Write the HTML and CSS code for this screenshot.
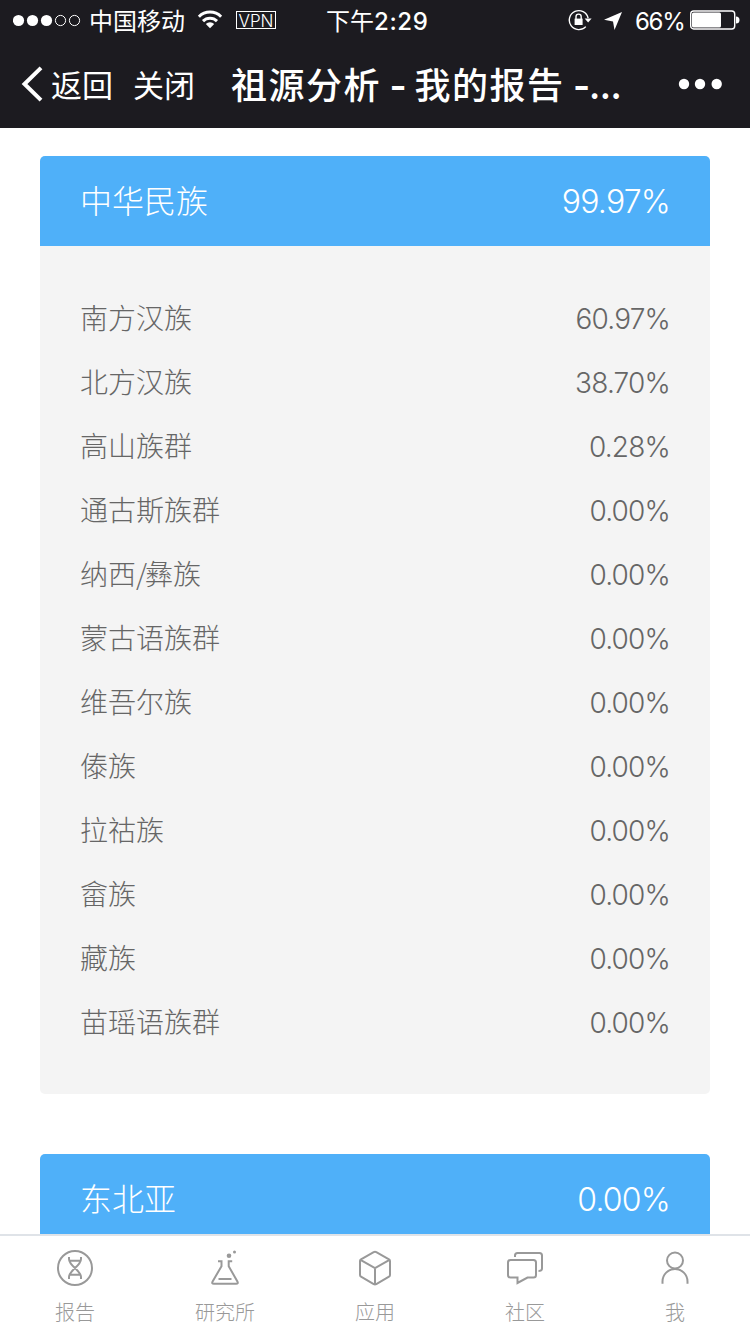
FILE: index.html
```html
<!DOCTYPE html>
<html lang="zh-CN">

<head>
    <meta charset="UTF-8">
    <meta name="viewport" content="width=device-width, initial-scale=1.0">
    <title>祖源分析 - 我的报告</title>
    <link rel="stylesheet" href="styles.css">
</head>

<body>
    <!-- 状态栏 -->
    <div class="status">
        <svg class="signal" width="68" height="14" viewBox="0 0 68 14">
            <g fill="#fff">
                <circle cx="5.5" cy="7.5" r="5.6" />
                <circle cx="19.5" cy="7.5" r="5.6" />
                <circle cx="33.5" cy="7.5" r="5.6" />
            </g>
            <g fill="none" stroke="#fff">
                <circle cx="47.5" cy="7.5" r="5.1" />
                <circle cx="61.5" cy="7.5" r="5.1" />
            </g>
        </svg>
        <span class="carrier">中国移动</span>
        <svg class="wifi" width="26" height="20" viewBox="0 0 26 20">
            <g fill="none" stroke="#fff" stroke-width="3">
                <path d="M1.9 7.7a15.7 15.7 0 0 1 22.2 0" />
                <path d="M6 12.1a9.9 9.9 0 0 1 14 0" />
            </g>
            <path d="M13 19.2l-4.2-4.2a6 6 0 0 1 8.4 0z" fill="#fff" />
        </svg>
        <span class="vpn">VPN</span>
        <span class="time">下午<b>2:29</b></span>
        <svg class="lock" width="24" height="22" viewBox="0 0 24 22">
            <path d="M17.8 17.6A9.5 9.5 0 1 1 20.1 9.2" fill="none" stroke="#fff" stroke-width="1.4" />
            <path d="M16.6 9.6h7l-3.5 4z" fill="#fff" />
            <rect x="6.6" y="9.6" width="8" height="6.4" fill="#fff" />
            <path d="M8 10V7.700a2.600 2.600 0 0 1 5.200 0V10" fill="none" stroke="#fff" stroke-width="1.4" />
        </svg>
        <svg class="locate" width="18" height="18" viewBox="0 0 18 18">
            <path d="M18 0L10.5 18L9 9.5L0 7.8z" fill="#fff" />
        </svg>
        <span class="percent">66%</span>
        <svg class="battery" width="50" height="20" viewBox="0 0 50 20">
            <rect x=".7" y="1" width="44" height="18" rx="3" fill="none" stroke="#fff" stroke-width="1.4" />
            <rect x="2" y="2.5" width="29" height="15" rx="1.5" fill="#fff" />
            <path d="M46 6.6a3.4 3.4 0 0 1 0 7z" fill="#fff" />
        </svg>
    </div>

    <!-- 导航栏 -->
    <div class="nav">
        <svg class="back" width="22" height="36" viewBox="0 0 22 36">
            <path d="M20 1.9L3.5 18 20 34.1" fill="none" stroke="#fff" stroke-width="4" />
        </svg>
        <span class="nav-link">返回</span>
        <span class="nav-link">关闭</span>
        <span class="title">祖源分析 <span class="dash">-</span> 我的报告 <span class="dash">-</span><span class="dots">...</span></span>
        <svg class="more" width="44" height="12" viewBox="0 0 44 12" fill="#fff">
            <circle cx="6" cy="6" r="5.2" />
            <circle cx="22" cy="6" r="5.2" />
            <circle cx="38.7" cy="6" r="5.2" />
        </svg>
    </div>

    <!-- 祖源列表 -->
    <div class="content">
        <div class="card">
            <div class="card-head"><span>中华民族</span><span class="num">99.97%</span></div>
            <ul class="list">
                <li><span>南方汉族</span><span class="num">60.97%</span></li>
                <li><span>北方汉族</span><span class="num">38.70%</span></li>
                <li><span>高山族群</span><span class="num">0.28%</span></li>
                <li><span>通古斯族群</span><span class="num">0.00%</span></li>
                <li><span>纳西<span class="slash">/</span>彝族</span><span class="num">0.00%</span></li>
                <li><span>蒙古语族群</span><span class="num">0.00%</span></li>
                <li><span>维吾尔族</span><span class="num">0.00%</span></li>
                <li><span>傣族</span><span class="num">0.00%</span></li>
                <li><span>拉祜族</span><span class="num">0.00%</span></li>
                <li><span>畲族</span><span class="num">0.00%</span></li>
                <li><span>藏族</span><span class="num">0.00%</span></li>
                <li><span>苗瑶语族群</span><span class="num">0.00%</span></li>
            </ul>
        </div>
        <div class="card">
            <div class="card-head"><span>东北亚</span><span class="num">0.00%</span></div>
        </div>
    </div>

    <!-- 底部菜单 -->
    <div class="tabs">
        <div class="tab">
            <svg width="40" height="40" viewBox="0 0 40 40">
                <circle cx="20" cy="20" r="17" />
                <path d="M14 9v2c0 7 12 11.5 12 18v2M26 9v2c0 7-12 11.5-12 18v2M15 12.8h10M15 26.8h10" />
            </svg>
            <span>报告</span>
        </div>
        <div class="tab">
            <svg width="40" height="40" viewBox="0 0 40 40">
                <path d="M13 13.2h3.500v5L7.600 33.500q-1.200 2.300 1.300 2.300h22.200q2.500 0 1.300-2.300L23.700 18.200v-5h3.500M13.500 31h13" />
                <circle class="solid" cx="24" cy="7.8" r="2.3" />
                <circle class="solid" cx="29.5" cy="4" r="1.5" />
            </svg>
            <span>研究所</span>
        </div>
        <div class="tab">
            <svg width="40" height="40" viewBox="0 0 40 40">
                <path d="M18.7 4.2q1.300-.7 2.600 0L34 11.300q1 .6 1 1.700v14q0 1.100-1 1.700l-12.700 7.500q-1.300.7-2.600 0L6 28.700q-1-.6-1-1.700V13q0-1.100 1-1.700zM5.500 11.800L20 20l14.500-8.200M20 20v16.500" />
            </svg>
            <span>应用</span>
        </div>
        <div class="tab">
            <svg width="40" height="40" viewBox="0 0 40 40">
                <path d="M5.5 12h23q2.500 0 2.500 2.500V27q0 2.500-2.500 2.500h-6L12.500 35v-5.500h-7Q3 29.500 3 27V14.500Q3 12 5.500 12z" />
                <path d="M10 9V7.5Q10 5 12.500 5h22Q37 5 37 7.500v13q0 2.600-3.500 2.600" />
            </svg>
            <span>社区</span>
        </div>
        <div class="tab">
            <svg width="40" height="40" viewBox="0 0 40 40">
                <circle cx="20" cy="12.5" r="8" />
                <path d="M7.5 35.8v-2.300a12.500 12.500 0 0 1 25 0v2.300" />
            </svg>
            <span>我</span>
        </div>
    </div>
</body>

</html>
```
FILE: styles.css
```css
* {
    box-sizing: border-box;
}

/* 页面布局样式 */
body {
    margin: 0;
    height: 1334px;
    display: flex;
    flex-direction: column;
    overflow: hidden;
    background: #fff;
    font-family: "Noto Sans CJK SC", sans-serif;
}

svg {
    flex: none;
    display: block;
}

span {
    white-space: nowrap;
}

/* 状态栏 */
.status {
    flex: none;
    height: 40px;
    display: flex;
    align-items: center;
    padding-left: 13px;
    background: #1c1b20;
    color: #fff;
    font-family: Inter, "Noto Sans CJK SC", sans-serif;
    font-size: 24px;
    line-height: 40px;
}

.carrier {
    width: 97px;
    margin: 4px 0 0 8px;
}

.wifi {
    margin: -2px 0 0 11px;
}

.vpn {
    width: 40px;
    height: 18px;
    margin-left: 13px;
    border: 1px solid #fff;
    font-size: 17px;
    font-weight: 300;
    line-height: 18px;
    text-align: center;
}

.time {
    width: 104px;
    margin: 3px 0 0 50px;
}

.time b {
    font-weight: 500;
    letter-spacing: 0.6px;
}

.lock {
    margin-left: 138px;
}

.locate {
    margin: 1px 0 0 12px;
}

.percent {
    width: 49px;
    margin: 3px 0 0 13px;
    letter-spacing: -1.3px;
}

.battery {
    margin-left: 6px;
}

/* 导航栏 */
.nav {
    flex: none;
    height: 88px;
    display: flex;
    align-items: center;
    padding: 0 28px 0 21px;
    background: #1c1b20;
    color: #fff;
}

.nav-link {
    width: 64px;
    margin: 0 0 2px 8px;
    font-size: 31px;
}

.nav-link + .nav-link {
    margin-left: 18px;
}

.title {
    width: 396px;
    margin: 0 0 3px 34px;
    font-size: 36px;
    font-weight: 500;
    letter-spacing: 1.5px;
    word-spacing: -1px;
}

/* 标题里的短横线 */
.dash {
    font-family: Inter, sans-serif;
    font-size: 37px;
    font-weight: 600;
    letter-spacing: -1px;
}

.dots {
    letter-spacing: 0;
}

.more {
    margin-left: auto;
}

/* 祖源列表 */
.content {
    flex: 1;
    min-height: 0;
    overflow: hidden;
    padding: 28px 40px 0;
    font-weight: 300;
}

.card {
    margin-bottom: 60px;
    border-radius: 5px;
    overflow: hidden;
    background: #f4f4f4;
}

.card-head {
    height: 90px;
    display: flex;
    justify-content: space-between;
    align-items: center;
    padding: 0 40px 4px;
    background: #4fb0f9;
    color: #fff;
    font-size: 32px;
}

.num {
    padding-top: 4px;
    font-family: Inter, sans-serif;
    font-weight: 300;
    letter-spacing: -0.8px;
}

.list {
    margin: 0;
    padding: 40px;
    list-style: none;
    color: #666;
    font-size: 28px;
}

.list li {
    height: 64px;
    display: flex;
    justify-content: space-between;
    align-items: center;
    padding-bottom: 2px;
}

.slash {
    letter-spacing: -2px;
}

/* 底部菜单 */
.tabs {
    flex: none;
    height: 100px;
    display: flex;
    border-top: 2px solid #dfe3e8;
}

.tab {
    flex: 1;
    display: flex;
    flex-direction: column;
    align-items: center;
    padding-top: 12px;
    color: #999;
    font-size: 20px;
    font-weight: 300;
    line-height: 30px;
}

.tab span {
    margin-top: 9px;
}

.tab svg {
    fill: none;
    stroke: #999;
    stroke-width: 2;
}

.tab .solid {
    fill: #999;
    stroke: none;
}
```
